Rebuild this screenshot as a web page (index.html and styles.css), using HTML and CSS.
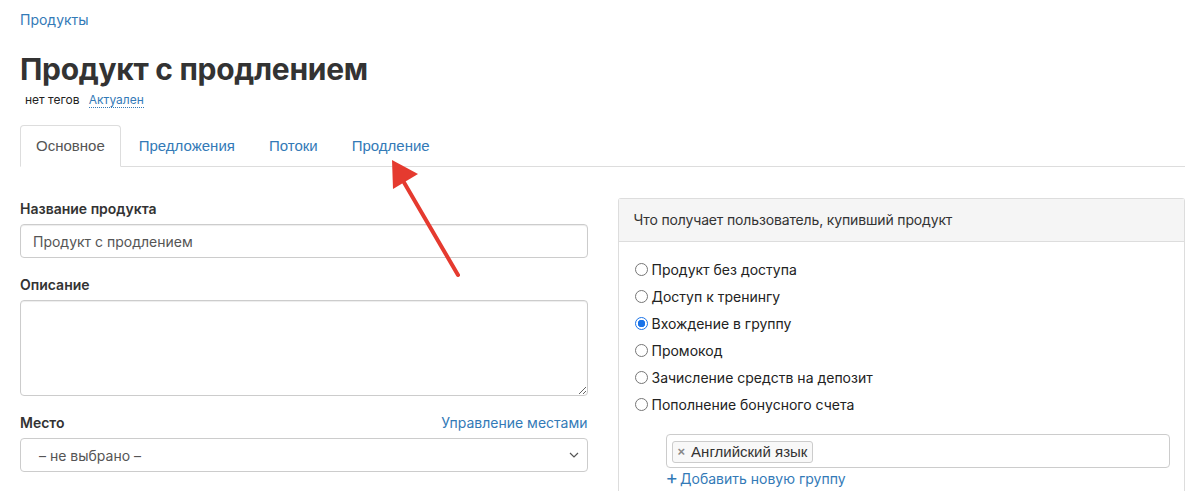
FILE: index.html
```html
<!DOCTYPE html>
<html lang="ru">
<head>
    <meta charset="UTF-8">
    <title>Продукт с продлением</title>
    <link rel="stylesheet" href="styles.css">
</head>
<body>

<div class="page">
    <!-- Breadcrumbs -->
    <div class="breadcrumbs"><a href="#">Продукты</a></div>

    <h1 class="title">Продукт с продлением</h1>
    <div class="meta">
        <span class="no-tags">нет тегов</span>
        <a href="#" class="status">Актуален</a>
    </div>

    <!-- Tabs -->
    <ul class="nav-tabs">
        <li class="active"><a href="#">Основное</a></li>
        <li><a href="#">Предложения</a></li>
        <li><a href="#">Потоки</a></li>
        <li><a href="#">Продление</a></li>
    </ul>

    <div class="columns">
        <!-- Left: product fields -->
        <div class="col-left">
            <div class="field">
                <label class="field-label">Название продукта</label>
                <input class="form-control" type="text" value="Продукт с продлением">
            </div>
            <div class="field">
                <label class="field-label">Описание</label>
                <textarea class="form-control textarea"></textarea>
            </div>
            <div class="field">
                <div class="label-row">
                    <label class="field-label">Место</label>
                    <a href="#">Управление местами</a>
                </div>
                <div class="select">
                    <span>– не выбрано –</span>
                    <svg width="10" height="6" viewBox="0 0 10 6"><path d="M1 1l4 4 4-4" fill="none" stroke="#555" stroke-width="1.2"/></svg>
                </div>
            </div>
        </div>

        <!-- Right: what the buyer gets -->
        <div class="panel">
            <div class="panel-heading">Что получает пользователь, купивший продукт</div>
            <div class="panel-body">
                <label class="radio"><span class="radio-dot"></span>Продукт без доступа</label>
                <label class="radio"><span class="radio-dot"></span>Доступ к тренингу</label>
                <label class="radio"><span class="radio-dot checked"></span>Вхождение в группу</label>
                <label class="radio"><span class="radio-dot"></span>Промокод</label>
                <label class="radio"><span class="radio-dot"></span>Зачисление средств на депозит</label>
                <label class="radio"><span class="radio-dot"></span>Пополнение бонусного счета</label>

                <div class="groups">
                    <div class="tag-box">
                        <span class="tag"><span class="tag-x">×</span>Английский язык</span>
                    </div>
                    <a href="#" class="add-group"><span class="plus">+</span>Добавить новую группу</a>
                </div>
            </div>
        </div>
    </div>

    <!-- Annotation arrow -->
    <svg class="arrow" width="90" height="130" viewBox="0 0 90 130">
        <line x1="78" y1="120" x2="22" y2="24" stroke="#e53a2f" stroke-width="4" stroke-linecap="round"/>
        <polygon points="12,5 13,34 38,19" fill="#e53a2f"/>
    </svg>
</div>

</body>
</html>
```

FILE: styles.css
```css
body {
    margin: 0;
    padding: 0;
    background-color: #fff;
    font-family: Inter, "Noto Sans", sans-serif;
    color: #333;
}
a {
    color: #337ab7;
    text-decoration: none;
}
.page {
    position: relative;
    padding: 10px 15px 0 20px;
}
.breadcrumbs {
    font-size: 14px;
    line-height: 20px;
}
.title {
    margin: 21px 0 0;
    font-size: 30px;
    line-height: 36px;
    font-weight: 700;
    letter-spacing: -0.3px;
    color: #333;
}
.meta {
    margin-top: 4px;
    padding-left: 5px;
    font-size: 12px;
    line-height: 18px;
}
.no-tags {
    color: #222;
    margin-right: 6px;
}
.status {
    border-bottom: 1px dotted #337ab7;
}
.nav-tabs {
    display: flex;
    list-style: none;
    margin: 16px 0 0;
    padding: 0;
    border-bottom: 1px solid #ddd;
    font-family: "Liberation Sans", Arial, sans-serif;
    font-size: 15px;
}
.nav-tabs li {
    margin-right: 2px;
    margin-bottom: -1px;
}
.nav-tabs a {
    display: block;
    padding: 10px 15px;
    line-height: 20px;
    border: 1px solid transparent;
    border-radius: 4px 4px 0 0;
}
.nav-tabs .active a {
    color: #555;
    background: #fff;
    border-color: #ddd #ddd transparent;
}
.columns {
    display: grid;
    grid-template-columns: 1fr 1fr;
    gap: 30px;
    align-items: start;
}
.col-left {
    padding-top: 32px;
}
.field {
    margin-bottom: 17px;
}
.field-label {
    display: block;
    font-size: 14px;
    line-height: 20px;
    font-weight: 600;
    margin-bottom: 5px;
    color: #333;
}
.label-row {
    display: flex;
    justify-content: space-between;
    align-items: baseline;
}
.label-row a {
    font-size: 14px;
    line-height: 20px;
}
.form-control {
    display: block;
    box-sizing: border-box;
    width: 100%;
    height: 34px;
    padding: 6px 12px;
    font-family: Inter, "Noto Sans", sans-serif;
    font-size: 14px;
    color: #555;
    border: 1px solid #ccc;
    border-radius: 4px;
    box-shadow: inset 0 1px 1px rgba(0, 0, 0, .075);
    background: #fff;
}
.textarea {
    height: 96px;
    resize: vertical;
}
.select {
    box-sizing: border-box;
    height: 34px;
    display: flex;
    align-items: center;
    justify-content: space-between;
    padding: 0 8px 0 18px;
    font-size: 14px;
    color: #555;
    border: 1px solid #ccc;
    border-radius: 4px;
}
.panel {
    margin-top: 31px;
    border: 1px solid #ddd;
    border-bottom: none;
    border-radius: 3px 3px 0 0;
    background: #fff;
}
.panel-heading {
    padding: 12px 15px;
    font-size: 14px;
    line-height: 18px;
    letter-spacing: -0.15px;
    color: #333;
    background: #f5f5f5;
    border-bottom: 1px solid #ddd;
}
.panel-body {
    padding: 14px 14px 2px 15px;
}
.radio {
    display: flex;
    align-items: center;
    height: 27px;
    font-size: 14px;
    color: #222;
}
.radio-dot {
    box-sizing: border-box;
    width: 13px;
    height: 13px;
    margin: 0 4px 0 1px;
    border: 1px solid #767676;
    border-radius: 50%;
    background: #fff;
}
.radio-dot.checked {
    border: 1px solid #1a73e8;
    background: radial-gradient(circle, #1a73e8 0 3.5px, #fff 4px);
}
.groups {
    margin: 16px 0 0 32px;
}
.tag-box {
    box-sizing: border-box;
    height: 34px;
    padding: 5px;
    border: 1px solid #ccc;
    border-radius: 4px;
}
.tag {
    display: inline-flex;
    align-items: center;
    height: 22px;
    padding: 0 5px;
    font-family: "Liberation Sans", Arial, sans-serif;
    font-size: 15px;
    color: #333;
    background: #f8f8f8;
    border: 1px solid #ccc;
    border-radius: 3px;
    box-sizing: border-box;
}
.tag-x {
    color: #888;
    font-weight: 700;
    font-size: 13px;
    margin-right: 6px;
}
.add-group {
    display: inline-block;
    margin-top: 1px;
    font-size: 14px;
    line-height: 20px;
}
.plus {
    font-size: 19px;
    line-height: 18px;
    margin-right: 2px;
}
.arrow {
    position: absolute;
    left: 380px;
    top: 155px;
}
```
